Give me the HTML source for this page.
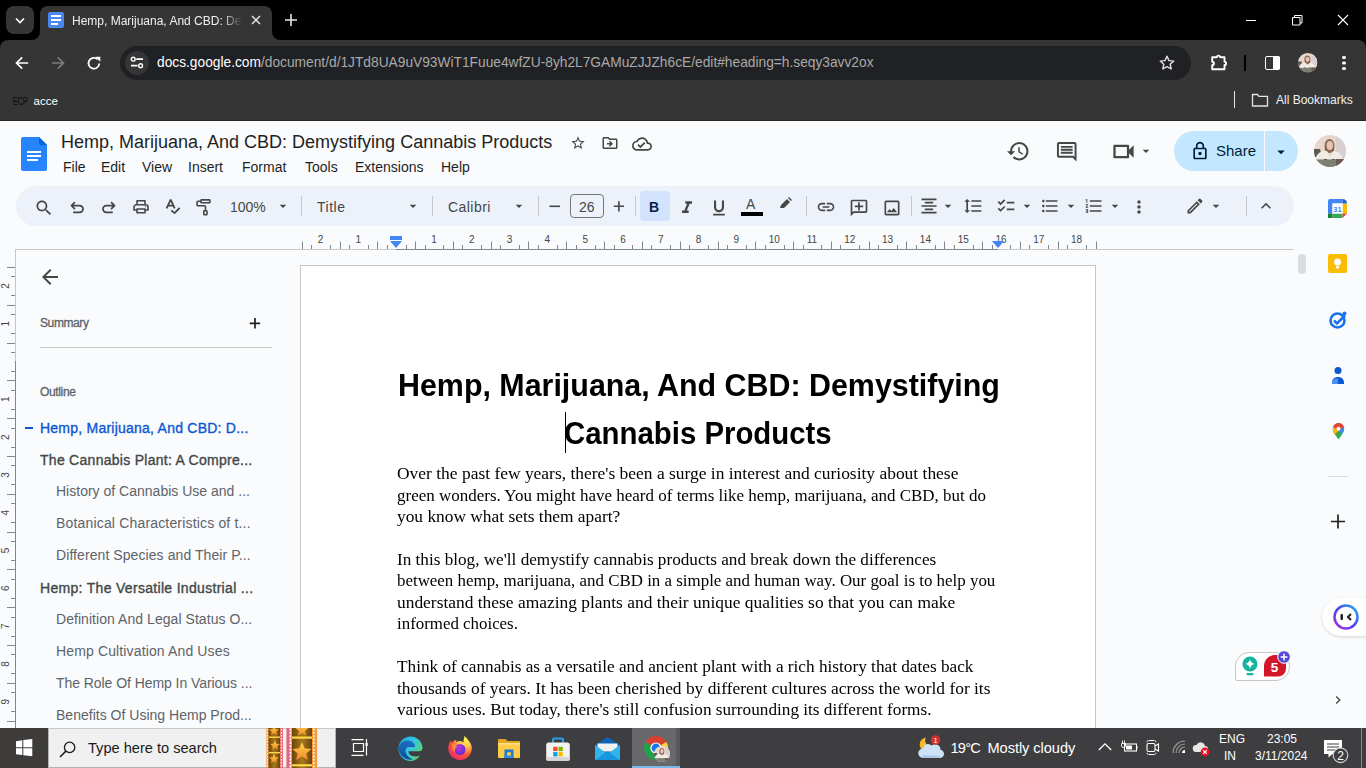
<!DOCTYPE html>
<html><head><meta charset="utf-8">
<style>
*{margin:0;padding:0;box-sizing:border-box}
html,body{width:1366px;height:768px;overflow:hidden;background:#f9fbfd;font-family:"Liberation Sans",sans-serif;position:relative}
.a{position:absolute}
.t{position:absolute;white-space:nowrap}
svg{position:absolute;overflow:visible}
</style></head><body>

<!-- ===== CHROME FRAME ===== -->
<div class="a" style="left:0;top:0;width:1366px;height:50px;background:#000"></div>
<div class="a" style="left:0;top:40px;width:1366px;height:80px;background:#353535;border-radius:8px 8px 0 0"></div>
<div class="a" style="left:0;top:120px;width:1366px;height:1px;background:#262626"></div>
<!-- active tab -->
<div class="a" style="left:40px;top:6px;width:232px;height:40px;border-radius:8px 8px 0 0;background:#353535"></div>
<div class="a" style="left:32px;top:30px;width:8px;height:10px;background:#353535"></div>
<div class="a" style="left:24px;top:22px;width:16px;height:18px;border-radius:0 0 8px 0;background:#000"></div>
<div class="a" style="left:272px;top:30px;width:8px;height:10px;background:#353535"></div>
<div class="a" style="left:272px;top:22px;width:16px;height:18px;border-radius:0 0 0 8px;background:#000"></div>
<!-- tab search -->
<div class="a" style="left:6px;top:6px;width:28px;height:28px;border-radius:8px;background:#353535"></div>
<svg style="left:14px;top:14px" width="12" height="12"><path d="M2 4.5l4 4 4-4" stroke="#fff" stroke-width="1.7" fill="none"/></svg>
<!-- docs favicon -->
<div class="a" style="left:48px;top:12px;width:16px;height:16px;border-radius:2px;background:#4a88f0"></div>
<div class="a" style="left:51px;top:15px;width:10px;height:2px;background:#fff"></div>
<div class="a" style="left:51px;top:19px;width:10px;height:2px;background:#fff"></div>
<div class="a" style="left:51px;top:23px;width:7px;height:2px;background:#fff"></div>
<div class="t" style="left:72px;top:14px;font-size:12px;color:#f0f0f0;width:170px;overflow:hidden;-webkit-mask-image:linear-gradient(90deg,#000 150px,transparent 170px)">Hemp, Marijuana, And CBD: Demystifying</div>
<svg style="left:251px;top:15px" width="10" height="10"><path d="M1 1l8 8M9 1l-8 8" stroke="#e8e8e8" stroke-width="1.4"/></svg>
<svg style="left:285px;top:14px" width="12" height="12"><path d="M6 0v12M0 6h12" stroke="#e8e8e8" stroke-width="1.6"/></svg>
<!-- window controls -->
<div class="a" style="left:1246px;top:20px;width:10px;height:1px;background:#fff"></div>
<svg style="left:1292px;top:15px" width="11" height="11"><path d="M0.5 2.5h7.5v7.5h-7.5z M2.5 2.5v-2h7.5v7.5h-2" stroke="#fff" stroke-width="1" fill="none"/></svg>
<svg style="left:1338px;top:15px" width="10" height="10"><path d="M0 0l10 10M10 0l-10 10" stroke="#fff" stroke-width="1.1"/></svg>

<!-- ===== TOOLBAR ===== -->
<svg style="left:14px;top:55px" width="16" height="16"><path d="M14.2 8H2.8M8.2 2.3L2.5 8l5.7 5.7" stroke="#fff" stroke-width="1.7" fill="none"/></svg>
<svg style="left:49px;top:55px" width="16" height="16"><path d="M2.8 8h11.4M8.8 2.3l5.7 5.7-5.7 5.7" stroke="#7c7c7c" stroke-width="1.7" fill="none"/></svg>
<svg style="left:86px;top:55px" width="16" height="16"><path d="M13.3 8.5A5.4 5.4 0 1 1 11.6 4.3" stroke="#fff" stroke-width="1.8" fill="none"/><path d="M9.3 1.7h5v5z" fill="#fff"/></svg>
<!-- omnibox -->
<div class="a" style="left:120px;top:46px;width:1071px;height:34px;border-radius:17px;background:#202124"></div>
<div class="a" style="left:125px;top:51px;width:24px;height:24px;border-radius:12px;background:#353535"></div>
<svg style="left:130px;top:56px" width="14" height="14"><circle cx="3.2" cy="3.2" r="1.9" stroke="#fff" stroke-width="1.4" fill="none"/><path d="M6.3 3.2h6.7M1 9.7h6.5" stroke="#fff" stroke-width="1.8"/><circle cx="10.6" cy="9.7" r="1.9" stroke="#fff" stroke-width="1.4" fill="none"/></svg>
<div class="t" style="left:157px;top:55px;font-size:13.75px;color:#fff;letter-spacing:0px">docs.google.com<span style="color:#a9a9a9">/document/d/1JTd8UA9uV93WiT1Fuue4wfZU-8yh2L7GAMuZJJZh6cE/edit#heading=h.seqy3avv2ox</span></div>
<svg style="left:1159px;top:55px" width="16" height="16"><path d="M8 1.2l2 4.4 4.8.5-3.6 3.2 1 4.7L8 11.6 3.8 14l1-4.7L1.2 6.1 6 5.6z" stroke="#e3e3e3" stroke-width="1.4" fill="none" stroke-linejoin="round"/></svg>
<svg style="left:1210px;top:53px" width="19" height="19" viewBox="0 0 19 19"><path d="M2.2 4.3h4.6a1.7 1.7 0 0 1 3.4 0h4.3v4.5a1.6 1.6 0 0 1 0 3.2v4.3H2.2v-4.2a1.7 1.7 0 0 0 0-3.4z" stroke="#fff" stroke-width="1.9" fill="none" stroke-linejoin="round"/></svg>
<div class="a" style="left:1244px;top:55px;width:2px;height:16px;background:#000"></div>
<div class="a" style="left:1265px;top:55.5px;width:14.5px;height:14.5px;border:1.8px solid #fff;border-radius:2px"></div>
<div class="a" style="left:1273px;top:55.5px;width:6.5px;height:14.5px;background:#fff;border-radius:0 2px 2px 0"></div>
<svg style="left:1298.3px;top:52.9px" width="19.4" height="19.4" viewBox="0 0 32 32"><defs><clipPath id="ca"><circle cx="16" cy="16" r="16"/></clipPath></defs><g clip-path="url(#ca)"><rect width="32" height="32" fill="#e6d6cc"/><rect x="22" y="0" width="10" height="32" fill="#d9cfd0"/><path d="M0 14h6l2 8H0z" fill="#5a5a50"/><ellipse cx="15.5" cy="11" rx="5" ry="7" fill="#8a6a55"/><ellipse cx="15.8" cy="10.5" rx="3.2" ry="4.5" fill="#e8c4b4"/><path d="M12 12l-2 13h3z M19 12l2 13h-3z" fill="#3a2a25"/><path d="M2 22c3-6 8-7 11-6l3 6 3-6c3 0 6 1 9 5v3H2z" fill="#f1ebe6"/><rect x="0" y="24.5" width="32" height="8" fill="#7d7f73"/><rect x="22" y="24" width="10" height="8" fill="#6a5a50"/></g></svg>
<div class="a" style="left:1342.4px;top:55.8px;width:3.2px;height:3.2px;border-radius:2px;background:#fff;box-shadow:0 5.45px 0 #fff,0 10.9px 0 #fff"></div>

<!-- ===== BOOKMARKS ===== -->
<div class="t" style="left:12.5px;top:94.5px;font-size:11px;color:#0a0a0a;font-family:'Liberation Sans',sans-serif;letter-spacing:-0.2px;transform:scaleX(0.68);transform-origin:0 0">ECP</div>
<div class="t" style="left:33.5px;top:94.5px;font-size:11.5px;color:#fff">acce</div>
<div class="a" style="left:1234px;top:91px;width:1px;height:17px;background:#e3e3e3"></div>
<svg style="left:1251px;top:92px" width="18" height="16"><path d="M1.5 2.5h5l1.5 1.8h8.5v9.7h-15z" stroke="#e3e3e3" stroke-width="1.3" fill="none"/></svg>
<div class="t" style="left:1276px;top:93px;font-size:12px;color:#f0f0f0">All Bookmarks</div>

<!-- ===== DOCS HEADER ===== -->
<svg style="left:21px;top:137px" width="26" height="34" viewBox="0 0 26 34"><path d="M2 0h16l8 8v24a2 2 0 0 1-2 2H2a2 2 0 0 1-2-2V2a2 2 0 0 1 2-2z" fill="#2684fc"/><path d="M18 0l8 8h-6a2 2 0 0 1-2-2z" fill="#0066da"/><path d="M6 14h14v2H6zM6 18h14v2H6zM6 22h11v2H6z" fill="#fff"/></svg>
<div class="t" style="left:61px;top:132.3px;font-size:18px;color:#1f1f1f">Hemp, Marijuana, And CBD: Demystifying Cannabis Products</div>
<svg style="left:570px;top:135px" width="16" height="16" viewBox="0 0 24 24"><path d="M22 9.24l-7.19-.62L12 2 9.19 8.63 2 9.24l5.46 4.73L5.82 21 12 17.270 18.18 21l-1.63-7.03L22 9.24zM12 15.4l-3.76 2.27 1-4.28-3.32-2.88 4.38-.38L12 6.1l1.71 4.04 4.38.38-3.32 2.88 1 4.28L12 15.4z" fill="#444746"/></svg>
<svg style="left:601px;top:134px" width="18" height="18" viewBox="0 0 24 24"><path d="M20 6h-8l-2-2H4c-1.1 0-1.99.9-1.99 2L2 18c0 1.1.9 2 2 2h16c1.1 0 2-.9 2-2V8c0-1.1-.9-2-2-2zm0 12H4V6h5.17l2 2H20v10zm-7.84-6H8v2h4.16l-1.59 1.59L11.99 17 16 13.01 11.990 9l-1.41 1.41L12.16 12z" fill="#444746"/></svg>
<svg style="left:632px;top:134px" width="20" height="20" viewBox="0 0 24 24"><path d="M19.35 10.04C18.67 6.59 15.64 4 12 4 9.11 4 6.6 5.64 5.35 8.04 2.34 8.36 0 10.91 0 14c0 3.31 2.69 6 6 6h13c2.76 0 5-2.24 5-5 0-2.64-2.05-4.78-4.65-4.96zM19 18H6c-2.21 0-4-1.79-4-4 0-2.05 1.53-3.76 3.56-3.97l1.07-.11.5-.95C8.08 7.14 9.94 6 12 6c2.62 0 4.88 1.86 5.39 4.43l.3 1.5 1.53.11c1.56.1 2.78 1.41 2.780 2.96 0 1.65-1.35 3-3 3zm-9-3.82l-2.09-2.09L6.5 13.5 10 17l6.01-6.01-1.41-1.41z" fill="#444746"/></svg>
<div class="t" style="left:63px;top:159px;font-size:14px;color:#1f1f1f">File</div>
<div class="t" style="left:101px;top:159px;font-size:14px;color:#1f1f1f">Edit</div>
<div class="t" style="left:142px;top:159px;font-size:14px;color:#1f1f1f">View</div>
<div class="t" style="left:188px;top:159px;font-size:14px;color:#1f1f1f">Insert</div>
<div class="t" style="left:242px;top:159px;font-size:14px;color:#1f1f1f">Format</div>
<div class="t" style="left:305px;top:159px;font-size:14px;color:#1f1f1f">Tools</div>
<div class="t" style="left:355px;top:159px;font-size:14px;color:#1f1f1f">Extensions</div>
<div class="t" style="left:441px;top:159px;font-size:14px;color:#1f1f1f">Help</div>
<svg style="left:1005.5px;top:138.5px" width="24.5" height="24.5" viewBox="0 0 24 24"><path d="M13 3c-4.97 0-9 4.03-9 9H1l3.89 3.89.07.14L9 12H6c0-3.87 3.13-7 7-7s7 3.13 7 7-3.13 7-7 7c-1.93 0-3.68-.79-4.94-2.06l-1.42 1.42C8.27 19.99 10.51 21 13 21c4.97 0 9-4.03 9-9s-4.03-9-9-9zm-1 5v5l4.28 2.54.72-1.21-3.5-2.08V8H12z" fill="#444746"/></svg>
<svg style="left:1055px;top:139.5px" width="23.5" height="23.5" viewBox="0 0 24 24"><path d="M21.99 4c0-1.1-.89-2-1.99-2H4c-1.1 0-2 .9-2 2v12c0 1.1.9 2 2 2h14l4 4-.01-18zM20 4v13.17L18.830 16H4V4h16zM6 12h12v2H6zm0-3h12v2H6zm0-3h12v2H6z" fill="#444746"/></svg>
<svg style="left:1109.5px;top:138px" width="27" height="27" viewBox="0 0 24 24"><path d="M17 10.5V7c0-.55-.45-1-1-1H4c-.55 0-1 .45-1 1v10c0 .55.45 1 1 1h12c.55 0 1-.45 1-1v-3.5l4 4v-11l-4 4zM15 16H5V8h10v8z" fill="#444746"/></svg>
<svg style="left:1138px;top:143px" width="16" height="16" viewBox="0 0 24 24"><path d="M7 10l5 5 5-5z" fill="#444746"/></svg>
<div class="a" style="left:1174px;top:131px;width:124px;height:40px;border-radius:20px;background:#c2e7ff"></div>
<div class="a" style="left:1264px;top:131px;width:1px;height:40px;background:#f9fbfd"></div>
<svg style="left:1190px;top:141px" width="20" height="20" viewBox="0 0 24 24"><path d="M18 8h-1V6c0-2.76-2.24-5-5-5S7 3.24 7 6v2H6c-1.1 0-2 .9-2 2v10c0 1.1.9 2 2 2h12c1.1 0 2-.9 2-2V10c0-1.1-.9-2-2-2zM9 6c0-1.66 1.34-3 3-3s3 1.34 3 3v2H9V6zm9 14H6V10h12v10zm-6-3c1.1 0 2-.9 2-2s-.9-2-2-2-2 .9-2 2 .9 2 2 2z" fill="#001d35"/></svg>
<div class="t" style="left:1216px;top:142px;font-size:15px;color:#001d35">Share</div>
<svg style="left:1272px;top:143px" width="18" height="18" viewBox="0 0 24 24"><path d="M7 10l5 5 5-5z" fill="#001d35"/></svg>
<svg style="left:1314px;top:135px" width="32" height="32" viewBox="0 0 32 32"><defs><clipPath id="cb"><circle cx="16" cy="16" r="16"/></clipPath></defs><g clip-path="url(#cb)"><rect width="32" height="32" fill="#e6d6cc"/><rect x="22" y="0" width="10" height="32" fill="#d9cfd0"/><path d="M0 14h6l2 8H0z" fill="#5a5a50"/><ellipse cx="15.5" cy="11" rx="5" ry="7" fill="#8a6a55"/><ellipse cx="15.8" cy="10.5" rx="3.2" ry="4.5" fill="#e8c4b4"/><path d="M12 12l-2 13h3z M19 12l2 13h-3z" fill="#3a2a25"/><path d="M2 22c3-6 8-7 11-6l3 6 3-6c3 0 6 1 9 5v3H2z" fill="#f1ebe6"/><rect x="0" y="24.5" width="32" height="8" fill="#7d7f73"/><rect x="22" y="24" width="10" height="8" fill="#6a5a50"/></g></svg>
<div class="a" style="left:16px;top:186px;width:1278px;height:40px;border-radius:20px;background:#edf2fa"></div>
<svg style="left:34px;top:197.5px" width="20" height="20" viewBox="0 0 24 24"><path d="M15.5 14h-.79l-.28-.27C15.41 12.59 16 11.11 16 9.5 16 5.91 13.09 3 9.5 3S3 5.91 3 9.5 5.91 16 9.5 16c1.61 0 3.09-.59 4.23-1.570l.27.28v.79l5 4.99L20.490 19l-4.99-5zm-6 0C7.01 14 5 11.99 5 9.5S7.01 5 9.5 5 14 7.01 14 9.5 11.99 14 9.5 14z" fill="#444746"/></svg>
<svg style="left:66px;top:196px" width="24" height="22" viewBox="0 0 24 22"><path d="M8.9 6.1L5.5 9.6l3.4 3.5M5.5 9.6h8.2a3.35 3.35 0 0 1 0 6.7H7.2" stroke="#444746" stroke-width="1.7" fill="none" stroke-linecap="butt" stroke-linejoin="round"/></svg>
<svg style="left:96px;top:196px" width="24" height="22" viewBox="0 0 24 22"><g transform="translate(24 0) scale(-1 1)"><path d="M8.9 6.1L5.5 9.6l3.4 3.5M5.5 9.6h8.2a3.35 3.35 0 0 1 0 6.7H7.2" stroke="#444746" stroke-width="1.7" fill="none" stroke-linecap="butt" stroke-linejoin="round"/></g></svg>
<svg style="left:128px;top:196px" width="24" height="22" viewBox="0 0 24 22"><path d="M9 8.6V4.8h8v3.8M8.6 14H6V11a2.2 2.2 0 0 1 2.2-2.2h9.6A2.2 2.2 0 0 1 20 11v3h-2.6M9 13h8v3.8H9z" stroke="#444746" stroke-width="1.6" fill="none" stroke-linejoin="round"/><circle cx="17.4" cy="10.6" r="0.7" fill="#444746"/></svg>
<svg style="left:160px;top:194px" width="24" height="24" viewBox="0 0 24 24"><path d="M6.6 14.4L10.7 5.6l4 8.8M8.1 11.6h5.2M11.3 16.4l3.2 2.7 5.2-5.2" stroke="#444746" stroke-width="1.8" fill="none" stroke-linejoin="bevel"/></svg>
<svg style="left:194px;top:194px" width="20" height="24" viewBox="0 0 20 24"><rect x="6.9" y="5.9" width="9" height="2.9" rx="0.6" stroke="#444746" stroke-width="1.6" fill="none" stroke-linejoin="round"/><path d="M6.9 7.3H4a0.9 0.9 0 0 0-.9.9v2.7a0.9 0.9 0 0 0 .9.9h6.6a0.9 0.9 0 0 1 .9.9V16" stroke="#444746" stroke-width="1.6" fill="none" stroke-linejoin="round"/><rect x="9.8" y="16.8" width="3.2" height="4" rx="0.6" stroke="#444746" stroke-width="1.6" fill="none" stroke-linejoin="round"/></svg>
<div class="t" style="left:230px;top:199px;font-size:14px;color:#444746">100%</div>
<svg style="left:275px;top:198px" width="16" height="16" viewBox="0 0 24 24"><path d="M7 10l5 5 5-5z" fill="#444746"/></svg>
<div class="a" style="left:301px;top:196px;width:1px;height:20px;background:#c7c7c7"></div>
<div class="a" style="left:432px;top:196px;width:1px;height:20px;background:#c7c7c7"></div>
<div class="a" style="left:538px;top:196px;width:1px;height:20px;background:#c7c7c7"></div>
<div class="a" style="left:635px;top:196px;width:1px;height:20px;background:#c7c7c7"></div>
<div class="a" style="left:806px;top:196px;width:1px;height:20px;background:#c7c7c7"></div>
<div class="a" style="left:911px;top:196px;width:1px;height:20px;background:#c7c7c7"></div>
<div class="a" style="left:1246px;top:196px;width:1px;height:20px;background:#c7c7c7"></div>
<div class="t" style="left:317px;top:198.5px;font-size:14px;letter-spacing:0.5px;color:#444746">Title</div>
<svg style="left:405px;top:198px" width="16" height="16" viewBox="0 0 24 24"><path d="M7 10l5 5 5-5z" fill="#444746"/></svg>
<div class="t" style="left:448px;top:198.5px;font-size:14px;letter-spacing:0.45px;color:#444746">Calibri</div>
<svg style="left:511px;top:198px" width="16" height="16" viewBox="0 0 24 24"><path d="M7 10l5 5 5-5z" fill="#444746"/></svg>
<svg style="left:540px;top:196px" width="24" height="20"><path d="M9.5 10.3h10.5" stroke="#444746" stroke-width="1.6"/></svg>
<div class="a" style="left:570px;top:194px;width:34px;height:24px;border:1px solid #747775;border-radius:4px"></div>
<div class="t" style="left:579px;top:199px;font-size:14px;color:#444746">26</div>
<svg style="left:605px;top:196px" width="24" height="20"><path d="M8.8 10.3h10.2M13.9 5.2v10.2" stroke="#444746" stroke-width="1.6"/></svg>
<div class="a" style="left:640px;top:191px;width:30px;height:30px;border-radius:4px;background:#d3e3fd"></div>
<div class="t" style="left:649px;top:199px;font-size:14px;font-weight:bold;color:#041e49">B</div>
<svg style="left:677px;top:198px" width="20" height="20" viewBox="0 0 24 24"><path d="M10 4v3h2.21l-3.42 8H6v3h8v-3h-2.21l3.42-8H18V4z" fill="#444746"/></svg>
<svg style="left:709px;top:197.5px" width="20" height="20" viewBox="0 0 24 24"><path d="M12 17c3.31 0 6-2.69 6-6V3h-2.5v8c0 1.93-1.57 3.5-3.5 3.5S8.5 12.93 8.5 11V3H6v8c0 3.31 2.69 6 6 6zm-7 2v2h14v-2H5z" fill="#444746"/></svg>
<div class="t" style="left:746px;top:196px;font-size:14px;color:#444746">A</div>
<div class="a" style="left:741px;top:212px;width:22px;height:4px;background:#000"></div>
<svg style="left:778px;top:196px" width="16" height="16" viewBox="0 0 16 16"><path d="M2 12l1-3 6-6 3 3-6 6zM10 2l1-1 3 3-1 1z" fill="#444746"/></svg>
<svg style="left:816px;top:197px" width="20" height="20" viewBox="0 0 24 24"><path d="M3.9 12c0-1.71 1.39-3.1 3.1-3.1h4V7H7c-2.76 0-5 2.24-5 5s2.24 5 5 5h4v-1.9H7c-1.71 0-3.1-1.39-3.1-3.1zM8 13h8v-2H8v2zm9-6h-4v1.9h4c1.71 0 3.1 1.39 3.1 3.1s-1.39 3.1-3.1 3.1h-4V17h4c2.76 0 5-2.24 5-5s-2.24-5-5-5z" fill="#444746"/></svg>
<svg style="left:848.5px;top:198px" width="20" height="20" viewBox="0 0 24 24"><path transform="translate(24 0) scale(-1 1)" d="M22 4c0-1.1-.9-2-2-2H4c-1.1 0-1.99.9-1.99 2L2 16c0 1.1.9 2 2 2h14l4 4V4zm-2 13.17L18.83 16H4V4h16v13.17zM13 5h-2v4H7v2h4v4h2v-4h4V9h-4z" fill="#444746"/></svg>
<svg style="left:881.5px;top:197.5px" width="20" height="20" viewBox="0 0 24 24"><path d="M19 5v14H5V5h14m0-2H5c-1.1 0-2 .9-2 2v14c0 1.1.9 2 2 2h14c1.1 0 2-.9 2-2V5c0-1.1-.9-2-2-2zm-4.86 8.86l-3 3.87L9 13.14 6 17h12l-3.86-5.14z" fill="#444746"/></svg>
<svg style="left:919px;top:196px" width="20" height="20" viewBox="0 0 24 24"><path d="M7 15v2h10v-2H7zm-4 6h18v-2H3v2zm0-8h18v-2H3v2zm4-6v2h10V7H7zM3 3v2h18V3H3z" fill="#444746"/></svg>
<svg style="left:940px;top:198px" width="16" height="16" viewBox="0 0 24 24"><path d="M7 10l5 5 5-5z" fill="#444746"/></svg>
<svg style="left:963px;top:196px" width="20" height="20" viewBox="0 0 24 24"><path d="M6 7h2.5L5 3.5 1.5 7H4v10H1.5L5 20.5 8.5 17H6V7zm4-2v2h12V5H10zm0 14h12v-2H10v2zm0-6h12v-2H10v2z" fill="#444746"/></svg>
<svg style="left:996px;top:196px" width="20" height="20" viewBox="0 0 24 24"><path d="M22 7h-9v2h9V7zm0 8h-9v2h9v-2zM5.54 11L2 7.46l1.41-1.41 2.12 2.12 4.24-4.24 1.41 1.41L5.54 11zm0 8L2 15.46l1.41-1.41 2.12 2.12 4.24-4.24 1.41 1.41L5.54 19z" fill="#444746"/></svg>
<svg style="left:1019px;top:198px" width="16" height="16" viewBox="0 0 24 24"><path d="M7 10l5 5 5-5z" fill="#444746"/></svg>
<svg style="left:1040px;top:196px" width="20" height="20" viewBox="0 0 24 24"><path d="M4 10.5c-.83 0-1.5.67-1.5 1.5s.67 1.5 1.5 1.5 1.5-.67 1.5-1.5-.67-1.5-1.5-1.5zm0-6c-.83 0-1.5.67-1.5 1.5S3.17 7.5 4 7.5 5.5 6.83 5.5 6 4.83 4.5 4 4.5zm0 12c-.83 0-1.5.68-1.5 1.5s.68 1.5 1.5 1.5 1.5-.68 1.5-1.5-.67-1.5-1.5-1.5zM7 19h14v-2H7v2zm0-6h14v-2H7v2zm0-8v2h14V5H7z" fill="#444746"/></svg>
<svg style="left:1063px;top:198px" width="16" height="16" viewBox="0 0 24 24"><path d="M7 10l5 5 5-5z" fill="#444746"/></svg>
<svg style="left:1084px;top:196px" width="20" height="20" viewBox="0 0 24 24"><path d="M2 17h2v.5H3v1h1v.5H2v1h3v-4H2v1zm1-9h1V4H2v1h1v3zm-1 3h1.8L2 13.1v.9h3v-1H3.2L5 10.9V10H2v1zm5-6v2h14V5H7zm0 14h14v-2H7v2zm0-6h14v-2H7v2z" fill="#444746"/></svg>
<svg style="left:1107px;top:198px" width="16" height="16" viewBox="0 0 24 24"><path d="M7 10l5 5 5-5z" fill="#444746"/></svg>
<svg style="left:1129px;top:197px" width="20" height="20" viewBox="0 0 24 24"><path d="M12 8c1.1 0 2-.9 2-2s-.9-2-2-2-2 .9-2 2 .9 2 2 2zm0 2c-1.1 0-2 .9-2 2s.9 2 2 2 2-.9 2-2-.9-2-2-2zm0 6c-1.1 0-2 .9-2 2s.9 2 2 2 2-.9 2-2-.9-2-2-2z" fill="#444746"/></svg>
<svg style="left:1185px;top:196px" width="20" height="20" viewBox="0 0 24 24"><path d="M3 17.25V21h3.75L17.81 9.94l-3.75-3.75L3 17.25zM5.92 19H5v-.92l9.06-9.06.92.92L5.92 19zM20.71 5.63l-2.34-2.34c-.2-.2-.45-.29-.71-.29s-.51.1-.7.29l-1.83 1.83 3.75 3.75 1.83-1.83c.39-.39.39-1.02 0-1.41z" fill="#444746"/></svg>
<svg style="left:1208px;top:198px" width="16" height="16" viewBox="0 0 24 24"><path d="M7 10l5 5 5-5z" fill="#444746"/></svg>
<svg style="left:1256px;top:196px" width="20" height="20" viewBox="0 0 24 24"><path d="M12 8l-6 6 1.41 1.41L12 10.83l4.59 4.58L18 14z" fill="#444746"/></svg>
<!-- ===== RULERS ===== -->
<div class="a" style="left:16px;top:249px;width:1278px;height:1px;background:#c7c7c7"></div>
<div class="a" style="left:396px;top:249px;width:602px;height:1px;background:#80868b"></div>
<svg style="left:0;top:230px" width="1366" height="20"><text x="1001.0" y="12.8" font-size="10" fill="#444746" text-anchor="middle" font-family="Liberation Sans">16</text><path d="M302.5 11.5V19" stroke="#80868b" stroke-width="1"/><path d="M311.5 15V19" stroke="#80868b" stroke-width="1"/><text x="320.6" y="12.8" font-size="10" fill="#444746" text-anchor="middle" font-family="Liberation Sans">2</text><path d="M330.5 15V19" stroke="#80868b" stroke-width="1"/><path d="M340.5 11.5V19" stroke="#80868b" stroke-width="1"/><path d="M349.5 15V19" stroke="#80868b" stroke-width="1"/><text x="358.4" y="12.8" font-size="10" fill="#444746" text-anchor="middle" font-family="Liberation Sans">1</text><path d="M368.5 15V19" stroke="#80868b" stroke-width="1"/><path d="M377.5 11.5V19" stroke="#80868b" stroke-width="1"/><path d="M387.5 15V19" stroke="#80868b" stroke-width="1"/><path d="M406.5 15V19" stroke="#80868b" stroke-width="1"/><path d="M415.5 11.5V19" stroke="#80868b" stroke-width="1"/><path d="M425.5 15V19" stroke="#80868b" stroke-width="1"/><text x="434.0" y="12.8" font-size="10" fill="#444746" text-anchor="middle" font-family="Liberation Sans">1</text><path d="M443.5 15V19" stroke="#80868b" stroke-width="1"/><path d="M453.5 11.5V19" stroke="#80868b" stroke-width="1"/><path d="M462.5 15V19" stroke="#80868b" stroke-width="1"/><text x="471.8" y="12.8" font-size="10" fill="#444746" text-anchor="middle" font-family="Liberation Sans">2</text><path d="M481.5 15V19" stroke="#80868b" stroke-width="1"/><path d="M491.5 11.5V19" stroke="#80868b" stroke-width="1"/><path d="M500.5 15V19" stroke="#80868b" stroke-width="1"/><text x="509.6" y="12.8" font-size="10" fill="#444746" text-anchor="middle" font-family="Liberation Sans">3</text><path d="M519.5 15V19" stroke="#80868b" stroke-width="1"/><path d="M528.5 11.5V19" stroke="#80868b" stroke-width="1"/><path d="M538.5 15V19" stroke="#80868b" stroke-width="1"/><text x="547.4" y="12.8" font-size="10" fill="#444746" text-anchor="middle" font-family="Liberation Sans">4</text><path d="M557.5 15V19" stroke="#80868b" stroke-width="1"/><path d="M566.5 11.5V19" stroke="#80868b" stroke-width="1"/><path d="M576.5 15V19" stroke="#80868b" stroke-width="1"/><text x="585.2" y="12.8" font-size="10" fill="#444746" text-anchor="middle" font-family="Liberation Sans">5</text><path d="M595.5 15V19" stroke="#80868b" stroke-width="1"/><path d="M604.5 11.5V19" stroke="#80868b" stroke-width="1"/><path d="M614.5 15V19" stroke="#80868b" stroke-width="1"/><text x="623.0" y="12.8" font-size="10" fill="#444746" text-anchor="middle" font-family="Liberation Sans">6</text><path d="M632.5 15V19" stroke="#80868b" stroke-width="1"/><path d="M642.5 11.5V19" stroke="#80868b" stroke-width="1"/><path d="M651.5 15V19" stroke="#80868b" stroke-width="1"/><text x="660.8" y="12.8" font-size="10" fill="#444746" text-anchor="middle" font-family="Liberation Sans">7</text><path d="M670.5 15V19" stroke="#80868b" stroke-width="1"/><path d="M680.5 11.5V19" stroke="#80868b" stroke-width="1"/><path d="M689.5 15V19" stroke="#80868b" stroke-width="1"/><text x="698.6" y="12.8" font-size="10" fill="#444746" text-anchor="middle" font-family="Liberation Sans">8</text><path d="M708.5 15V19" stroke="#80868b" stroke-width="1"/><path d="M718.5 11.5V19" stroke="#80868b" stroke-width="1"/><path d="M727.5 15V19" stroke="#80868b" stroke-width="1"/><text x="736.4" y="12.8" font-size="10" fill="#444746" text-anchor="middle" font-family="Liberation Sans">9</text><path d="M746.5 15V19" stroke="#80868b" stroke-width="1"/><path d="M755.5 11.5V19" stroke="#80868b" stroke-width="1"/><path d="M765.5 15V19" stroke="#80868b" stroke-width="1"/><text x="774.2" y="12.8" font-size="10" fill="#444746" text-anchor="middle" font-family="Liberation Sans">10</text><path d="M784.5 15V19" stroke="#80868b" stroke-width="1"/><path d="M793.5 11.5V19" stroke="#80868b" stroke-width="1"/><path d="M803.5 15V19" stroke="#80868b" stroke-width="1"/><text x="812.0" y="12.8" font-size="10" fill="#444746" text-anchor="middle" font-family="Liberation Sans">11</text><path d="M821.5 15V19" stroke="#80868b" stroke-width="1"/><path d="M831.5 11.5V19" stroke="#80868b" stroke-width="1"/><path d="M840.5 15V19" stroke="#80868b" stroke-width="1"/><text x="849.8" y="12.8" font-size="10" fill="#444746" text-anchor="middle" font-family="Liberation Sans">12</text><path d="M859.5 15V19" stroke="#80868b" stroke-width="1"/><path d="M869.5 11.5V19" stroke="#80868b" stroke-width="1"/><path d="M878.5 15V19" stroke="#80868b" stroke-width="1"/><text x="887.6" y="12.8" font-size="10" fill="#444746" text-anchor="middle" font-family="Liberation Sans">13</text><path d="M897.5 15V19" stroke="#80868b" stroke-width="1"/><path d="M906.5 11.5V19" stroke="#80868b" stroke-width="1"/><path d="M916.5 15V19" stroke="#80868b" stroke-width="1"/><text x="925.4" y="12.8" font-size="10" fill="#444746" text-anchor="middle" font-family="Liberation Sans">14</text><path d="M935.5 15V19" stroke="#80868b" stroke-width="1"/><path d="M944.5 11.5V19" stroke="#80868b" stroke-width="1"/><path d="M954.5 15V19" stroke="#80868b" stroke-width="1"/><text x="963.2" y="12.8" font-size="10" fill="#444746" text-anchor="middle" font-family="Liberation Sans">15</text><path d="M973.5 15V19" stroke="#80868b" stroke-width="1"/><path d="M982.5 11.5V19" stroke="#80868b" stroke-width="1"/><path d="M992.5 15V19" stroke="#80868b" stroke-width="1"/><path d="M1010.5 15V19" stroke="#80868b" stroke-width="1"/><path d="M1020.5 11.5V19" stroke="#80868b" stroke-width="1"/><path d="M1029.5 15V19" stroke="#80868b" stroke-width="1"/><text x="1038.8" y="12.8" font-size="10" fill="#444746" text-anchor="middle" font-family="Liberation Sans">17</text><path d="M1048.5 15V19" stroke="#80868b" stroke-width="1"/><path d="M1058.5 11.5V19" stroke="#80868b" stroke-width="1"/><path d="M1067.5 15V19" stroke="#80868b" stroke-width="1"/><text x="1076.6" y="12.8" font-size="10" fill="#444746" text-anchor="middle" font-family="Liberation Sans">18</text><path d="M1086.5 15V19" stroke="#80868b" stroke-width="1"/><path d="M1096.5 11.5V19" stroke="#80868b" stroke-width="1"/></svg>
<svg style="left:390px;top:236px" width="13" height="13"><rect x="0" y="0" width="12" height="4" fill="#4285f4"/><path d="M0 5h12l-6 7z" fill="#4285f4"/></svg>
<svg style="left:992px;top:241px" width="13" height="9"><path d="M0 0h12l-6 7z" fill="#4285f4"/></svg>
<div class="a" style="left:15px;top:249px;width:1px;height:479px;background:#c7c7c7"></div>
<div class="a" style="left:15px;top:361px;width:1px;height:367px;background:#80868b"></div>
<svg style="left:0;top:0" width="16" height="728"><path d="M7 267.5H15" stroke="#80868b" stroke-width="1"/><path d="M11 276.5H15" stroke="#80868b" stroke-width="1"/><text x="0" y="0" transform="translate(5 285.9) rotate(-90)" font-size="10" fill="#444746" text-anchor="middle" font-family="Liberation Sans" dy="3.5">2</text><path d="M11 295.5H15" stroke="#80868b" stroke-width="1"/><path d="M7 305.5H15" stroke="#80868b" stroke-width="1"/><path d="M11 314.5H15" stroke="#80868b" stroke-width="1"/><text x="0" y="0" transform="translate(5 323.7) rotate(-90)" font-size="10" fill="#444746" text-anchor="middle" font-family="Liberation Sans" dy="3.5">1</text><path d="M11 333.5H15" stroke="#80868b" stroke-width="1"/><path d="M7 343.5H15" stroke="#80868b" stroke-width="1"/><path d="M11 352.5H15" stroke="#80868b" stroke-width="1"/><path d="M11 371.5H15" stroke="#80868b" stroke-width="1"/><path d="M7 380.5H15" stroke="#80868b" stroke-width="1"/><path d="M11 390.5H15" stroke="#80868b" stroke-width="1"/><text x="0" y="0" transform="translate(5 399.3) rotate(-90)" font-size="10" fill="#444746" text-anchor="middle" font-family="Liberation Sans" dy="3.5">1</text><path d="M11 409.5H15" stroke="#80868b" stroke-width="1"/><path d="M7 418.5H15" stroke="#80868b" stroke-width="1"/><path d="M11 428.5H15" stroke="#80868b" stroke-width="1"/><text x="0" y="0" transform="translate(5 437.1) rotate(-90)" font-size="10" fill="#444746" text-anchor="middle" font-family="Liberation Sans" dy="3.5">2</text><path d="M11 447.5H15" stroke="#80868b" stroke-width="1"/><path d="M7 456.5H15" stroke="#80868b" stroke-width="1"/><path d="M11 465.5H15" stroke="#80868b" stroke-width="1"/><text x="0" y="0" transform="translate(5 474.9) rotate(-90)" font-size="10" fill="#444746" text-anchor="middle" font-family="Liberation Sans" dy="3.5">3</text><path d="M11 484.5H15" stroke="#80868b" stroke-width="1"/><path d="M7 494.5H15" stroke="#80868b" stroke-width="1"/><path d="M11 503.5H15" stroke="#80868b" stroke-width="1"/><text x="0" y="0" transform="translate(5 512.7) rotate(-90)" font-size="10" fill="#444746" text-anchor="middle" font-family="Liberation Sans" dy="3.5">4</text><path d="M11 522.5H15" stroke="#80868b" stroke-width="1"/><path d="M7 532.5H15" stroke="#80868b" stroke-width="1"/><path d="M11 541.5H15" stroke="#80868b" stroke-width="1"/><text x="0" y="0" transform="translate(5 550.5) rotate(-90)" font-size="10" fill="#444746" text-anchor="middle" font-family="Liberation Sans" dy="3.5">5</text><path d="M11 560.5H15" stroke="#80868b" stroke-width="1"/><path d="M7 569.5H15" stroke="#80868b" stroke-width="1"/><path d="M11 579.5H15" stroke="#80868b" stroke-width="1"/><text x="0" y="0" transform="translate(5 588.3) rotate(-90)" font-size="10" fill="#444746" text-anchor="middle" font-family="Liberation Sans" dy="3.5">6</text><path d="M11 598.5H15" stroke="#80868b" stroke-width="1"/><path d="M7 607.5H15" stroke="#80868b" stroke-width="1"/><path d="M11 617.5H15" stroke="#80868b" stroke-width="1"/><text x="0" y="0" transform="translate(5 626.1) rotate(-90)" font-size="10" fill="#444746" text-anchor="middle" font-family="Liberation Sans" dy="3.5">7</text><path d="M11 636.5H15" stroke="#80868b" stroke-width="1"/><path d="M7 645.5H15" stroke="#80868b" stroke-width="1"/><path d="M11 654.5H15" stroke="#80868b" stroke-width="1"/><text x="0" y="0" transform="translate(5 663.9) rotate(-90)" font-size="10" fill="#444746" text-anchor="middle" font-family="Liberation Sans" dy="3.5">8</text><path d="M11 673.5H15" stroke="#80868b" stroke-width="1"/><path d="M7 683.5H15" stroke="#80868b" stroke-width="1"/><path d="M11 692.5H15" stroke="#80868b" stroke-width="1"/><text x="0" y="0" transform="translate(5 701.7) rotate(-90)" font-size="10" fill="#444746" text-anchor="middle" font-family="Liberation Sans" dy="3.5">9</text><path d="M11 711.5H15" stroke="#80868b" stroke-width="1"/><path d="M7 721.5H15" stroke="#80868b" stroke-width="1"/></svg>
<!-- ===== OUTLINE SIDEBAR ===== -->
<svg style="left:38px;top:265px" width="24" height="24" viewBox="0 0 24 24"><path d="M20 11H7.830l5.59-5.59L12 4l-8 8 8 8 1.41-1.41L7.83 13H20v-2z" fill="#444746"/></svg>
<div class="t" style="left:40px;top:316px;font-size:12px;font-weight:normal;-webkit-text-stroke:0.3px #5f6368;letter-spacing:-0.4px;color:#5f6368">Summary</div>
<svg style="left:245px;top:313px" width="20" height="20"><path d="M4.7 10.3h10.5M10 5v10.6" stroke="#1f1f1f" stroke-width="1.7"/></svg>
<div class="a" style="left:40px;top:347px;width:232px;height:1px;background:#c4c7c5"></div>
<div class="t" style="left:40px;top:385px;font-size:12px;font-weight:normal;-webkit-text-stroke:0.3px #5f6368;letter-spacing:-0.35px;color:#5f6368">Outline</div>
<div class="a" style="left:25px;top:427px;width:8px;height:2px;background:#0b57d0"></div>
<div class="t" style="left:40px;top:420px;font-size:14px;letter-spacing:0.233px;font-weight:normal;-webkit-text-stroke:0.35px #0b57d0;color:#0b57d0">Hemp, Marijuana, And CBD: D...</div>
<div class="t" style="left:40px;top:452px;font-size:14px;letter-spacing:0.277px;font-weight:normal;-webkit-text-stroke:0.35px #444746;color:#444746">The Cannabis Plant: A Compre...</div>
<div class="t" style="left:56px;top:483px;font-size:14px;letter-spacing:0.008px;font-weight:normal;color:#5f6368">History of Cannabis Use and ...</div>
<div class="t" style="left:56px;top:515px;font-size:14px;letter-spacing:0.171px;font-weight:normal;color:#5f6368">Botanical Characteristics of t...</div>
<div class="t" style="left:56px;top:547px;font-size:14px;letter-spacing:0.078px;font-weight:normal;color:#5f6368">Different Species and Their P...</div>
<div class="t" style="left:40px;top:580px;font-size:14px;letter-spacing:0.309px;font-weight:normal;-webkit-text-stroke:0.35px #444746;color:#444746">Hemp: The Versatile Industrial ...</div>
<div class="t" style="left:56px;top:611px;font-size:14px;letter-spacing:0.053px;font-weight:normal;color:#5f6368">Definition And Legal Status O...</div>
<div class="t" style="left:56px;top:643px;font-size:14px;letter-spacing:0.134px;font-weight:normal;color:#5f6368">Hemp Cultivation And Uses</div>
<div class="t" style="left:56px;top:675px;font-size:14px;letter-spacing:-0.060px;font-weight:normal;color:#5f6368">The Role Of Hemp In Various ...</div>
<div class="t" style="left:56px;top:707px;font-size:14px;letter-spacing:0.013px;font-weight:normal;color:#5f6368">Benefits Of Using Hemp Prod...</div>
<!-- ===== PAGE ===== -->
<div class="a" style="left:300px;top:265px;width:796px;height:470px;background:#fff;border:1px solid #c7c7c7"></div>
<div class="t" style="left:398px;top:367px;font-size:32px;font-weight:bold;color:#000;transform:scaleX(0.95);transform-origin:0 0">Hemp, Marijuana, And CBD: Demystifying</div>
<div class="t" style="left:564px;top:414.5px;font-size:32px;font-weight:bold;color:#000;transform:scaleX(0.918);transform-origin:0 0">Cannabis Products</div>
<div class="a" style="left:565px;top:412px;width:1px;height:41px;background:#000"></div>
<div class="t" style="left:397px;top:465.28px;font-size:15.8px;font-family:'Liberation Serif',serif;color:#000;transform:scaleX(1.1044);transform-origin:0 0">Over the past few years, there's been a surge in interest and curiosity about these</div>
<div class="t" style="left:397px;top:486.78px;font-size:15.8px;font-family:'Liberation Serif',serif;color:#000;transform:scaleX(1.0749);transform-origin:0 0">green wonders. You might have heard of terms like hemp, marijuana, and CBD, but do</div>
<div class="t" style="left:397px;top:508.28px;font-size:15.8px;font-family:'Liberation Serif',serif;color:#000;transform:scaleX(1.0993);transform-origin:0 0">you know what sets them apart?</div>
<div class="t" style="left:397px;top:550.78px;font-size:15.8px;font-family:'Liberation Serif',serif;color:#000;transform:scaleX(1.0860);transform-origin:0 0">In this blog, we'll demystify cannabis products and break down the differences</div>
<div class="t" style="left:397px;top:572.28px;font-size:15.8px;font-family:'Liberation Serif',serif;color:#000;transform:scaleX(1.0699);transform-origin:0 0">between hemp, marijuana, and CBD in a simple and human way. Our goal is to help you</div>
<div class="t" style="left:397px;top:593.78px;font-size:15.8px;font-family:'Liberation Serif',serif;color:#000;transform:scaleX(1.1025);transform-origin:0 0">understand these amazing plants and their unique qualities so that you can make</div>
<div class="t" style="left:397px;top:615.28px;font-size:15.8px;font-family:'Liberation Serif',serif;color:#000;transform:scaleX(1.0683);transform-origin:0 0">informed choices.</div>
<div class="t" style="left:397px;top:658.28px;font-size:15.8px;font-family:'Liberation Serif',serif;color:#000;transform:scaleX(1.0906);transform-origin:0 0">Think of cannabis as a versatile and ancient plant with a rich history that dates back</div>
<div class="t" style="left:397px;top:679.78px;font-size:15.8px;font-family:'Liberation Serif',serif;color:#000;transform:scaleX(1.1014);transform-origin:0 0">thousands of years. It has been cherished by different cultures across the world for its</div>
<div class="t" style="left:397px;top:701.28px;font-size:15.8px;font-family:'Liberation Serif',serif;color:#000;transform:scaleX(1.0892);transform-origin:0 0">various uses. But today, there's still confusion surrounding its different forms.</div>
<div class="a" style="left:1298px;top:254px;width:8px;height:20px;border-radius:4px;background:#dadce0"></div>
<!-- ===== RIGHT SIDE PANEL ===== -->
<svg style="left:1328px;top:199px" width="19" height="19" viewBox="0 0 19 19"><path d="M2 0h12.5v4.5H4.5v10H0V2a2 2 0 0 1 2-2z" fill="#4285f4"/><rect x="0" y="14.5" width="4.5" height="4.5" fill="#188038"/><path d="M4.5 14.5h10V19H4.5z" fill="#34a853"/><path d="M14.5 4.5H19V14.5h-4.5z" fill="#fbbc04"/><path d="M14.5 0a4.5 4.5 0 0 1 4.5 4.5h-4.5z" fill="#1967d2"/><path d="M14.5 14.5H19L14.5 19z" fill="#ea4335"/><rect x="4.5" y="4.5" width="10" height="10" fill="#fff"/><text x="9.5" y="12.8" font-size="7.5" font-weight="bold" fill="#4285f4" text-anchor="middle" font-family="Liberation Sans">31</text></svg>
<svg style="left:1328px;top:254px" width="19" height="19" viewBox="0 0 19 19"><rect x="0" y="0" width="19" height="19" rx="2" fill="#fbbc04"/><circle cx="9.5" cy="8" r="3.5" fill="#fff"/><rect x="8" y="12" width="3" height="2.5" fill="#fff"/></svg>
<svg style="left:1328px;top:310px" width="20" height="20" viewBox="0 0 20 20"><circle cx="9.5" cy="10.5" r="7" stroke="#1a73e8" stroke-width="2.6" fill="none"/><path d="M6 10.5l3 3 8-8" stroke="#1a73e8" stroke-width="2.6" fill="none"/><circle cx="16.5" cy="3.5" r="2" fill="#1a73e8"/></svg>
<svg style="left:1329px;top:366px" width="18" height="20" viewBox="0 0 18 20"><circle cx="9" cy="4.5" r="3.5" fill="#0b57d0"/><path d="M3 17c0-4 2.5-6 6-6s6 2 6 6v1H3z" fill="#0b57d0"/><path d="M3 17c0-2 1-3.5 3-4.5h3v5.5H3z" fill="#4c8df6"/></svg>
<svg style="left:1332px;top:423px" width="13" height="17" viewBox="0 0 16 21"><path d="M8 0a7 7 0 0 1 7 7c0 5-7 13-7 13S1 12 1 7a7 7 0 0 1 7-7z" fill="#34a853"/><path d="M8 0a7 7 0 0 1 6.5 4.5L3 14C2 12 1 9 1 7a7 7 0 0 1 7-7z" fill="#ea4335"/><path d="M14.5 4.5A7 7 0 0 1 15 7c0 2-1 4-2.5 6L8 10z" fill="#4285f4"/><path d="M1.5 4.5L8 10 3 14C2 12 1 9 1 7z" fill="#fbbc04"/><circle cx="8" cy="7" r="2.5" fill="#fff"/></svg>
<div class="a" style="left:1328px;top:476px;width:20px;height:1px;background:#dadce0"></div>
<svg style="left:1326px;top:509px" width="24" height="24"><path d="M5 12.5h14M12 5.5v14" stroke="#1f1f1f" stroke-width="1.7"/></svg>
<div class="a" style="left:1322px;top:598px;width:60px;height:38px;border-radius:19px;background:#fff;box-shadow:0 1px 3px rgba(0,0,0,0.15)"></div>
<svg style="left:1333px;top:604px" width="26" height="26" viewBox="0 0 26 26"><defs><linearGradient id="bg1" x1="0" y1="1" x2="1" y2="0"><stop offset="0" stop-color="#b02ce0"/><stop offset="0.5" stop-color="#4a40f0"/><stop offset="1" stop-color="#22b8ee"/></linearGradient></defs><circle cx="13" cy="13" r="11.5" fill="none" stroke="url(#bg1)" stroke-width="2.5"/><circle cx="13" cy="13" r="9" fill="#fff"/><rect x="7.5" y="10" width="2.5" height="6" rx="1" fill="#1f1f1f"/><path d="M18 10l-3 3 3 3" stroke="#1f1f1f" stroke-width="2" fill="none"/></svg>
<div class="a" style="left:1235px;top:652px;width:55px;height:29px;border-radius:14px 14px 14px 2px;background:#fff;border:1px solid #c7c7c7"></div>
<svg style="left:1241px;top:655px" width="18" height="22" viewBox="0 0 18 22"><circle cx="9" cy="9" r="7.5" fill="#15b39b"/><path d="M9 4.3c.5 2.6 2 4.1 4.7 4.7-2.7.6-4.2 2.1-4.7 4.7-.5-2.6-2-4.1-4.7-4.7 2.7-.6 4.2-2.1 4.7-4.7z" fill="#fff"/><rect x="5.5" y="18" width="7" height="2.2" rx="1" fill="#15b39b"/></svg>
<svg style="left:1263px;top:650px" width="30" height="30" viewBox="0 0 30 30"><path d="M1 26.6V16A11 11 0 0 1 12 5h3a8 8 0 0 1 8 8v5.6a8 8 0 0 1-8 8z" fill="#d3172b"/><text x="11.5" y="22" font-size="13.5" font-weight="bold" fill="#fff" text-anchor="middle" font-family="Liberation Sans">5</text><circle cx="21" cy="7" r="6.3" fill="#5548d9" stroke="#fff" stroke-width="1"/><path d="M21 3.6v6.8M17.6 7h6.8" stroke="#fff" stroke-width="1.5"/></svg>
<svg style="left:1330px;top:692px" width="16" height="16" viewBox="0 0 24 24"><path d="M10 6L8.59 7.41 13.17 12l-4.58 4.59L10 18l6-6z" fill="#444746"/></svg>
<!-- ===== TASKBAR ===== -->
<div class="a" style="left:0;top:728px;width:1366px;height:40px;background:#3e3e41"></div>
<div class="a" style="left:0;top:728px;width:48px;height:40px;background:#3d3c3a"></div>
<svg style="left:16px;top:739px" width="17" height="18" viewBox="0 0 17 18"><path d="M0 2.2L6.3 1.3V8.2H0zM7.3 1.1L16.3 0V8.2H7.3zM0 9.2H6.3V16L0 15.2zM7.3 9.2H16.3V17.3L7.3 16.2z" fill="#fff"/></svg>
<div class="a" style="left:48px;top:728px;width:288px;height:40px;background:#f0f0f0;border:1px solid #b4b4b4;border-top-color:#c8c8c8"></div>
<svg style="left:59px;top:741px" width="18" height="18" viewBox="0 0 18 18"><circle cx="10.6" cy="6.4" r="5.2" stroke="#1a1a1a" stroke-width="1.3" fill="none"/><path d="M6.9 10.1L1 16" stroke="#1a1a1a" stroke-width="1.5"/></svg>
<div class="t" style="left:88px;top:739.5px;font-size:14.6px;color:#1a1a1a">Type here to search</div>
<svg style="left:266px;top:728px;overflow:hidden" width="52" height="40" viewBox="0 0 52 40"><defs><linearGradient id="gb" x1="0" x2="1"><stop offset="0" stop-color="#6e420e"/><stop offset="0.5" stop-color="#a27a1c"/><stop offset="1" stop-color="#6e420e"/></linearGradient><linearGradient id="gs" x1="0" y1="0" x2="0" y2="1"><stop offset="0" stop-color="#ffd34a"/><stop offset="1" stop-color="#f08a2c"/></linearGradient></defs><rect x="0.4" y="0" width="16.4" height="40" fill="#f59a3c"/><rect x="14.5" y="0" width="2.3" height="40" fill="#e6619a"/><rect x="2.5" y="0" width="11.5" height="40" fill="url(#gb)"/><rect x="1.1" y="1" width="1" height="1.6" fill="#fff"/><rect x="14.9" y="1" width="1" height="1.6" fill="#fff"/><rect x="1.1" y="4" width="1" height="1.6" fill="#fff"/><rect x="14.9" y="4" width="1" height="1.6" fill="#fff"/><rect x="1.1" y="7" width="1" height="1.6" fill="#fff"/><rect x="14.9" y="7" width="1" height="1.6" fill="#fff"/><rect x="1.1" y="10" width="1" height="1.6" fill="#fff"/><rect x="14.9" y="10" width="1" height="1.6" fill="#fff"/><rect x="1.1" y="13" width="1" height="1.6" fill="#fff"/><rect x="14.9" y="13" width="1" height="1.6" fill="#fff"/><rect x="1.1" y="16" width="1" height="1.6" fill="#fff"/><rect x="14.9" y="16" width="1" height="1.6" fill="#fff"/><rect x="1.1" y="19" width="1" height="1.6" fill="#fff"/><rect x="14.9" y="19" width="1" height="1.6" fill="#fff"/><rect x="1.1" y="22" width="1" height="1.6" fill="#fff"/><rect x="14.9" y="22" width="1" height="1.6" fill="#fff"/><rect x="1.1" y="25" width="1" height="1.6" fill="#fff"/><rect x="14.9" y="25" width="1" height="1.6" fill="#fff"/><rect x="1.1" y="28" width="1" height="1.6" fill="#fff"/><rect x="14.9" y="28" width="1" height="1.6" fill="#fff"/><rect x="1.1" y="31" width="1" height="1.6" fill="#fff"/><rect x="14.9" y="31" width="1" height="1.6" fill="#fff"/><rect x="1.1" y="34" width="1" height="1.6" fill="#fff"/><rect x="14.9" y="34" width="1" height="1.6" fill="#fff"/><rect x="1.1" y="37" width="1" height="1.6" fill="#fff"/><rect x="14.9" y="37" width="1" height="1.6" fill="#fff"/><rect x="2.5" y="8.5" width="11.5" height="1.4" fill="#ffd84a"/><rect x="2.5" y="24" width="11.5" height="1.4" fill="#ffd84a"/><polygon points="8.00,-2.00 9.32,1.18 12.76,1.45 10.14,3.70 10.94,7.05 8.00,5.25 5.06,7.05 5.86,3.70 3.24,1.45 6.68,1.18" fill="url(#gs)"/><polygon points="9.00,12.50 10.32,15.68 13.76,15.95 11.14,18.20 11.94,21.55 9.00,19.75 6.06,21.55 6.86,18.20 4.24,15.95 7.68,15.68" fill="url(#gs)"/><polygon points="8.00,26.00 9.32,29.18 12.76,29.45 10.14,31.70 10.94,35.05 8.00,33.25 5.06,35.05 5.86,31.70 3.24,29.45 6.68,29.18" fill="url(#gs)"/><rect x="20.6" y="0" width="30.5" height="40" fill="#f59a3c"/><rect x="20.6" y="0" width="3" height="40" fill="#e0609a"/><rect x="26" y="0" width="20" height="40" fill="url(#gb)"/><rect x="23.6" y="0.5" width="1.5" height="2" fill="#fff"/><rect x="47" y="0.5" width="1.5" height="2" fill="#fff"/><rect x="23.6" y="3.8" width="1.5" height="2" fill="#fff"/><rect x="47" y="3.8" width="1.5" height="2" fill="#fff"/><rect x="23.6" y="7.2" width="1.5" height="2" fill="#fff"/><rect x="47" y="7.2" width="1.5" height="2" fill="#fff"/><rect x="23.6" y="10.5" width="1.5" height="2" fill="#fff"/><rect x="47" y="10.5" width="1.5" height="2" fill="#fff"/><rect x="23.6" y="13.9" width="1.5" height="2" fill="#fff"/><rect x="47" y="13.9" width="1.5" height="2" fill="#fff"/><rect x="23.6" y="17.2" width="1.5" height="2" fill="#fff"/><rect x="47" y="17.2" width="1.5" height="2" fill="#fff"/><rect x="23.6" y="20.6" width="1.5" height="2" fill="#fff"/><rect x="47" y="20.6" width="1.5" height="2" fill="#fff"/><rect x="23.6" y="23.9" width="1.5" height="2" fill="#fff"/><rect x="47" y="23.9" width="1.5" height="2" fill="#fff"/><rect x="23.6" y="27.3" width="1.5" height="2" fill="#fff"/><rect x="47" y="27.3" width="1.5" height="2" fill="#fff"/><rect x="23.6" y="30.6" width="1.5" height="2" fill="#fff"/><rect x="47" y="30.6" width="1.5" height="2" fill="#fff"/><rect x="23.6" y="34" width="1.5" height="2" fill="#fff"/><rect x="47" y="34" width="1.5" height="2" fill="#fff"/><rect x="23.6" y="37.3" width="1.5" height="2" fill="#fff"/><rect x="47" y="37.3" width="1.5" height="2" fill="#fff"/><rect x="26" y="8.5" width="20" height="2.2" fill="#ffd84a"/><rect x="26" y="36.2" width="20" height="2.2" fill="#ffd84a"/><polygon points="36.00,-5.00 37.85,-0.55 42.66,-0.16 39.00,2.97 40.11,7.66 36.00,5.15 31.89,7.66 33.00,2.97 29.34,-0.16 34.15,-0.55" fill="url(#gs)"/><polygon points="36.00,14.00 38.65,20.36 45.51,20.91 40.28,25.39 41.88,32.09 36.00,28.50 30.12,32.09 31.72,25.39 26.49,20.91 33.35,20.36" fill="url(#gs)"/></svg>
<svg style="left:351px;top:739px" width="18" height="17" viewBox="0 0 18 17"><path d="M0.5 0.7h12M0.5 16.3h12M2.5 4.5h10v8h-10z M15.5 0v16.5" stroke="#fff" stroke-width="1.2" fill="none"/><rect x="14.5" y="4" width="2.2" height="3" fill="#fff"/></svg>
<svg style="left:398px;top:735.5px" width="25" height="25" viewBox="0 0 25 25"><defs><linearGradient id="e1" x1="0" y1="0" x2="1" y2="0.6"><stop offset="0" stop-color="#1ba5e0"/><stop offset="0.55" stop-color="#31c6e8"/><stop offset="1" stop-color="#5fd36b"/></linearGradient><linearGradient id="e2" x1="0" y1="0" x2="0" y2="1"><stop offset="0" stop-color="#1d6fbf"/><stop offset="1" stop-color="#0c4f99"/></linearGradient></defs><path d="M12.5 0.5A12 12 0 0 1 24.5 12c0 2-1.3 3.3-3.5 3.3H10.5c0 3.3 3 5.2 6.5 5.2 2 0 3.6-.5 5-1.3-2 3.8-5.8 5.8-9.5 5.8A12 12 0 0 1 0.5 12.5 12 12 0 0 1 12.5 0.5z" fill="url(#e1)"/><path d="M0.5 12.5C1 7 6 4 10.5 4.5c4 .5 6.5 3 6.5 6.5h-6.5c-1.5 0-3 1.2-3 3.5 0 4 3.3 7.3 7.5 8.8-1 .4-2 .5-3 .5A12 12 0 0 1 0.5 12.5z" fill="url(#e2)"/></svg>
<svg style="left:448px;top:735.5px" width="24" height="24" viewBox="0 0 24 24"><defs><radialGradient id="f1" cx="0.75" cy="0.15" r="1.05"><stop offset="0" stop-color="#fff44f"/><stop offset="0.3" stop-color="#ffbd4f"/><stop offset="0.6" stop-color="#ff5634"/><stop offset="1" stop-color="#e31587"/></radialGradient><radialGradient id="f2" cx="0.4" cy="0.3" r="0.8"><stop offset="0" stop-color="#b833e1"/><stop offset="1" stop-color="#5b2ecc"/></radialGradient></defs><path d="M16.5 0c2.5 2 4 4.5 4 4.5 2.5 2.5 3.3 5.5 3.3 8A11.8 11.8 0 1 1 1.2 7.5c.3-1 .8-2 1.5-2.8.5 1.3 1.3 2 1.3 2 1-1.5 2.8-2.6 4.5-2.7-.6 1-.5 2-.5 2 2-1.5 5.5-1.5 7.5.5 0-2.5.5-4.5 1-6.5z" fill="url(#f1)"/><circle cx="12" cy="13.5" r="5.5" fill="url(#f2)"/><path d="M4 8c2 0 4 1 5 3-2 1-3 3-2 5-2-1-3.5-4.5-3-8z" fill="#ff8a3d"/></svg>
<svg style="left:498px;top:738.5px" width="22" height="19" viewBox="0 0 22 19"><path d="M0 1a1 1 0 0 1 1-1h6.5l2 2H21a1 1 0 0 1 1 1v3H0z" fill="#e5a823"/><path d="M0 4h22v14a1 1 0 0 1-1 1H1a1 1 0 0 1-1-1z" fill="#ffcd4a"/><path d="M0 4h22v1.5H0z" fill="#ffe08a"/><path d="M6.5 10.5h9v8h-2.6v-5.2h-3.8v5.2H6.5z" fill="#1e7ad4"/><rect x="6" y="16.5" width="10" height="2.5" fill="#2a8fe4"/></svg>
<svg style="left:545.5px;top:736.5px" width="24" height="24" viewBox="0 0 24 24"><path d="M7 6.5V3a1.5 1.5 0 0 1 1.5-1.5h7A1.5 1.5 0 0 1 17 3v3.5" stroke="#2a9fe4" stroke-width="2.2" fill="none"/><rect x="0.2" y="5.5" width="23.6" height="18.2" rx="2.5" fill="#f3f3f3"/><rect x="0.2" y="20" width="23.6" height="3.7" rx="1.5" fill="#d6d6d6"/><rect x="7.2" y="9.8" width="4.3" height="4.3" fill="#f25022"/><rect x="12.5" y="9.8" width="4.3" height="4.3" fill="#7fba00"/><rect x="7.2" y="15.1" width="4.3" height="4.3" fill="#00a4ef"/><rect x="12.5" y="15.1" width="4.3" height="4.3" fill="#ffb900"/></svg>
<svg style="left:595px;top:736.5px" width="25" height="23" viewBox="0 0 25 23"><path d="M0 8L12.5 0 25 8v15H0z" fill="#0f63b8"/><path d="M2.5 6.5h20v8h-20z" fill="#f2f2f2"/><path d="M0 8l12.5 9L25 8v15H0z" fill="#30b3f0"/><path d="M0 23l12.5-8.5L25 23z" fill="#1a95e0"/></svg>
<div class="a" style="left:632px;top:728px;width:44px;height:40px;background:#68686b"></div>
<div class="a" style="left:676px;top:728px;width:4px;height:40px;background:#58585b"></div>
<div class="a" style="left:632px;top:766px;width:48px;height:2px;background:#76b9ed"></div>
<svg style="left:644px;top:736px" width="24" height="24" viewBox="0 0 24 24"><path d="M12 12L1.6 6A12 12 0 0 1 22.4 6z" fill="#db3e2f"/><path d="M12 12L22.4 6A12 12 0 0 1 12 24z" fill="#fdd13f"/><path d="M12 12V24A12 12 0 0 1 1.6 6z" fill="#22a04c"/><circle cx="12" cy="12" r="5.6" fill="#fff"/><circle cx="12" cy="12" r="4.4" fill="#1a73e8"/></svg>
<svg style="left:654px;top:746px" width="16" height="16" viewBox="0 0 32 32"><defs><clipPath id="cc"><circle cx="16" cy="16" r="16"/></clipPath></defs><g clip-path="url(#cc)"><rect width="32" height="32" fill="#e6d6cc"/><rect x="22" y="0" width="10" height="32" fill="#d9cfd0"/><path d="M0 14h6l2 8H0z" fill="#5a5a50"/><ellipse cx="15.5" cy="11" rx="5" ry="7" fill="#8a6a55"/><ellipse cx="15.8" cy="10.5" rx="3.2" ry="4.5" fill="#e8c4b4"/><path d="M12 12l-2 13h3z M19 12l2 13h-3z" fill="#3a2a25"/><path d="M2 22c3-6 8-7 11-6l3 6 3-6c3 0 6 1 9 5v3H2z" fill="#f1ebe6"/><rect x="0" y="24.5" width="32" height="8" fill="#7d7f73"/><rect x="22" y="24" width="10" height="8" fill="#6a5a50"/></g></svg>
<svg style="left:917px;top:735px" width="27" height="24" viewBox="0 0 27 24"><path d="M9 2.5a7 7 0 1 0 7.5 8.5A6 6 0 0 1 9 2.5z" fill="#f7b731"/><path d="M6 13.5a5 5 0 0 1 8.5-3 5.5 5.5 0 0 1 9 4.2 4.2 4.2 0 0 1-1.3 8.3H6a4.7 4.7 0 0 1 0-9.5z" fill="#cde2f6"/><path d="M6 20a4 4 0 0 0 0 3h16a4 4 0 0 0 1.5-2z" fill="#a9c8e8"/><circle cx="18.5" cy="5" r="4.8" fill="#d32f2f"/><text x="18.5" y="7.8" font-size="7.5" fill="#fff" text-anchor="middle" font-family="Liberation Sans">1</text></svg>
<div class="t" style="left:950.5px;top:739.5px;font-size:14.6px;letter-spacing:-0.8px;color:#fff">19°C</div>
<div class="t" style="left:987.5px;top:739.5px;font-size:14.6px;letter-spacing:-0.05px;color:#fff">Mostly cloudy</div>
<svg style="left:1098px;top:742px" width="14" height="9"><path d="M0.8 8L7 1.8 13.2 8" stroke="#fff" stroke-width="1.3" fill="none"/></svg>
<svg style="left:1121px;top:740px" width="17" height="14" viewBox="0 0 17 14"><rect x="3.5" y="4" width="12" height="7" stroke="#fff" stroke-width="1.1" fill="none"/><rect x="5" y="5.5" width="6" height="4" fill="#fff"/><path d="M16 6v3M1.5 0.5v3M3.5 0.5v3M0.5 3.5h4v2a2 2 0 0 1-4 0z" stroke="#fff" stroke-width="0.9" fill="none"/></svg>
<svg style="left:1146px;top:738px" width="14" height="19" viewBox="0 0 14 19"><rect x="1" y="5.5" width="8" height="8" rx="1.5" stroke="#fff" stroke-width="1.1" fill="none"/><path d="M9 8l3.5-2v7L9 11M2.5 2.5h6M2.5 16.5h6" stroke="#fff" stroke-width="1.1" fill="none"/><path d="M2 2.5a2 2 0 0 0-1 1.7M9 2.5a2 2 0 0 1 1 1.7M2 16.5a2 2 0 0 1-1-1.7M9 16.5a2 2 0 0 0 1-1.7" stroke="#fff" stroke-width="1" fill="none"/></svg>
<svg style="left:1172px;top:740px" width="14" height="14" viewBox="0 0 14 14"><path d="M1 13A12 12 0 0 1 13 1M4 13a9 9 0 0 1 9-9M7 13a6 6 0 0 1 6-6" stroke="#9a9a9a" stroke-width="1.2" fill="none"/><path d="M10 13a3 3 0 0 1 3-3v3z" fill="#fff"/></svg>
<svg style="left:1192px;top:740px" width="18" height="17" viewBox="0 0 18 17"><path d="M4 12a3.5 3.5 0 0 1 .5-7 4.5 4.5 0 0 1 8.5 1 3 3 0 0 1 0 6z" fill="#e6e6e6"/><circle cx="13" cy="12" r="4.4" fill="#e81123"/><path d="M11.2 10.2l3.6 3.6M14.8 10.2l-3.6 3.6" stroke="#fff" stroke-width="1.2"/></svg>
<div class="t" style="left:1219px;top:732px;font-size:12px;color:#fff">ENG</div>
<div class="t" style="left:1224px;top:749px;font-size:12px;color:#fff">IN</div>
<div class="t" style="left:1267px;top:732px;font-size:12px;color:#fff">23:05</div>
<div class="t" style="left:1255px;top:749px;font-size:12px;color:#fff">3/11/2024</div>
<svg style="left:1323px;top:739px" width="28" height="26" viewBox="0 0 28 26"><path d="M1 1h18v14H9.5L5.5 18.5V15H1z" fill="#fff"/><path d="M4 5h12M4 8h12M4 11h9" stroke="#3e3e41" stroke-width="1.1"/><circle cx="17.5" cy="16.3" r="7.3" fill="#3e3e41" stroke="#d8d8d8" stroke-width="1.1"/><text x="17.5" y="20.6" font-size="12" fill="#fff" text-anchor="middle" font-family="Liberation Sans">2</text></svg>
<div class="a" style="left:1361px;top:728px;width:1px;height:40px;background:#8a8a8a"></div>
</body></html>
